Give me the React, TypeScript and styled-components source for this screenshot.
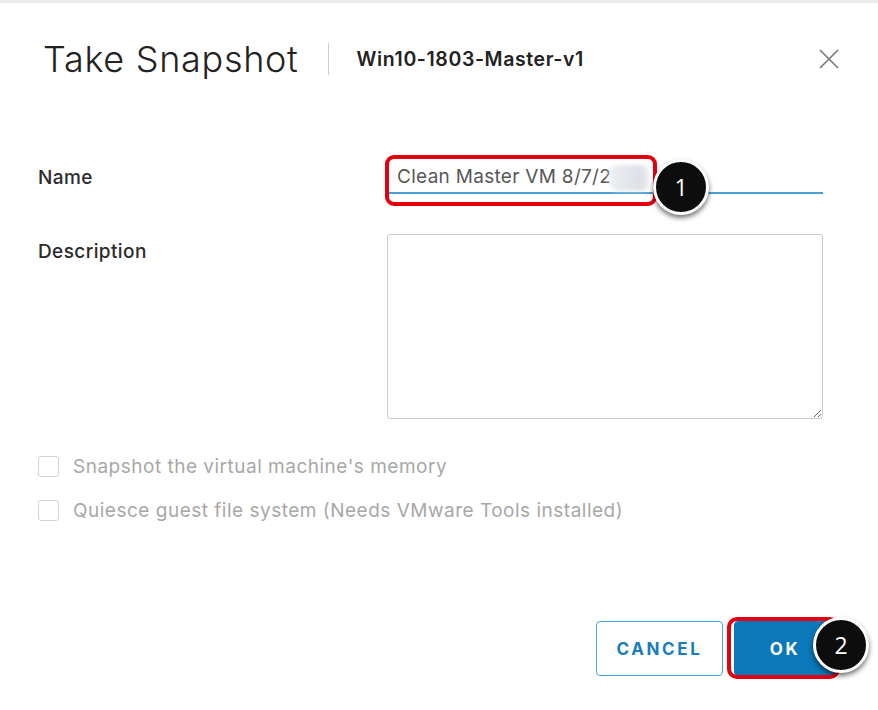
import React from 'react';
import styled, { createGlobalStyle } from 'styled-components';

const GlobalStyle = createGlobalStyle`
  html, body {
    margin: 0;
    padding: 0;
    background: #fff;
  }

  body {
    font-family: Inter, "Open Sans", "Liberation Sans", sans-serif;
    color: #333;
  }
`;

const Dialog = styled.div`
  position: relative;
  width: 878px;
  height: 710px;
  box-sizing: border-box;
  border-top: 3px solid #ebebeb;
  overflow: hidden;
  background: #fff;
`;

const Header = styled.header`
  display: flex;
  align-items: center;
  height: 112px;
  padding: 0 37px 0 43px;
`;

const Title = styled.h1`
  margin: 0;
  font-size: 36px;
  font-weight: 300;
  color: #222;
  letter-spacing: 0.7px;
`;

const Divider = styled.span`
  width: 1px;
  height: 32px;
  margin: 0 28px 0 29px;
  background: #cfcfcf;
`;

const Subtitle = styled.h2`
  margin: 0;
  font-size: 19.5px;
  font-weight: 600;
  color: #222;
  letter-spacing: 0.6px;
  flex: 1;
`;

const CloseButton = styled.button`
  display: flex;
  align-items: center;
  justify-content: center;
  width: 24px;
  height: 24px;
  padding: 0;
  border: 0;
  background: none;
  cursor: pointer;
`;

const Form = styled.form`
  display: grid;
  grid-template-columns: 349px 436px;
  row-gap: 40px;
  margin-top: 45px;
  padding-left: 38px;
`;

const Label = styled.label<{ $top?: boolean }>`
  display: flex;
  align-items: ${(p) => (p.$top ? 'flex-start' : 'center')};
  padding-top: ${(p) => (p.$top ? '6px' : '0')};
  font-size: 19px;
  font-weight: 500;
  letter-spacing: 0.4px;
  color: #2b2b2b;
`;

const Field = styled.div`
  position: relative;
`;

const TextInput = styled.input`
  display: block;
  width: 100%;
  height: 34px;
  box-sizing: border-box;
  padding: 0 10px;
  border: 0;
  border-bottom: 2px solid #4a9fd9;
  outline: none;
  font-family: inherit;
  font-size: 19px;
  letter-spacing: 0.3px;
  color: #575757;
  background: transparent;
`;

const TextArea = styled.textarea`
  display: block;
  width: 100%;
  height: 185px;
  box-sizing: border-box;
  border: 1px solid #cdcdcd;
  border-radius: 3px;
  resize: vertical;
  outline: none;
  font-family: inherit;
  font-size: 17px;
`;

const Redacted = styled.span`
  position: absolute;
  left: 222px;
  top: 5px;
  width: 40px;
  height: 26px;
  border-radius: 8px;
  background: linear-gradient(90deg, rgba(232, 234, 238, 0.7), #e4e7eb 40%, #dde1e6 80%, rgba(228, 231, 235, 0.7));
  filter: blur(2px);
`;

const Highlight = styled.span<{ $inset: string; $width?: string; $radius: number }>`
  position: absolute;
  inset: ${(p) => p.$inset};
  ${(p) => (p.$width ? `width: ${p.$width};` : '')}
  border: 4px solid #e3000f;
  border-radius: ${(p) => p.$radius}px;
  pointer-events: none;
`;

const Badge = styled.span<{ $left: number; $top: number }>`
  position: absolute;
  left: ${(p) => p.$left}px;
  top: ${(p) => p.$top}px;
  width: 50px;
  height: 50px;
  display: flex;
  align-items: center;
  justify-content: center;
  border: 3px solid #fff;
  border-radius: 50%;
  background: #0d0d0d;
  box-shadow: 0 3px 5px rgba(0, 0, 0, 0.55);
  color: #fff;
  font-family: "Open Sans", "Liberation Sans", sans-serif;
  font-size: 23px;
  font-weight: 400;
  z-index: 2;
`;

const Options = styled.div`
  display: flex;
  flex-direction: column;
  margin-top: 25px;
  padding-left: 38px;
`;

const Option = styled.label`
  display: flex;
  align-items: center;
  height: 44px;
  gap: 14px;
  font-size: 19px;
  letter-spacing: 0.5px;
  color: #a8a8a8;
`;

const Box = styled.span`
  width: 19px;
  height: 19px;
  border: 1px solid #d2d2d2;
  border-radius: 3px;
  background: #fff;
`;

const Footer = styled.footer`
  display: flex;
  justify-content: flex-end;
  gap: 11px;
  margin-top: 89px;
  padding-right: 42px;
`;

const ButtonWrap = styled.div`
  position: relative;
`;

const Button = styled.button<{ $primary?: boolean }>`
  height: 55px;
  width: ${(p) => (p.$primary ? '102px' : '127px')};
  box-sizing: border-box;
  border: 1px solid ${(p) => (p.$primary ? '#0079b8' : '#49a8dc')};
  border-radius: 4px;
  background: ${(p) => (p.$primary ? '#0a78b9' : '#fff')};
  color: ${(p) => (p.$primary ? '#fff' : '#1a7dbd')};
  font-family: inherit;
  font-size: 17px;
  font-weight: 700;
  letter-spacing: 2.6px;
  cursor: pointer;
`;

export default function App() {
  return (
    <>
      <GlobalStyle />
      <Dialog>
        <Header>
          <Title>Take Snapshot</Title>
          <Divider />
          <Subtitle>Win10-1803-Master-v1</Subtitle>
          <CloseButton aria-label="Close">
            <svg width="22" height="22" viewBox="0 0 22 22">
              <path d="M2 2 L20 20 M20 2 L2 20" stroke="#7a7a7a" strokeWidth="1.7" fill="none" />
            </svg>
          </CloseButton>
        </Header>

        <Form>
          <Label htmlFor="snap-name">Name</Label>
          <Field>
            <TextInput id="snap-name" defaultValue="Clean Master VM 8/7/2" readOnly />
            <Redacted />
            <Highlight $inset="-5px auto auto -2px" $width="264px" $radius={9} style={{ height: 43 }} />
            <Badge $left={266} $top={-1}>1</Badge>
          </Field>

          <Label $top htmlFor="snap-desc">Description</Label>
          <Field>
            <TextArea id="snap-desc" />
          </Field>
        </Form>

        <Options>
          <Option>
            <Box />
            Snapshot the virtual machine's memory
          </Option>
          <Option>
            <Box />
            Quiesce guest file system (Needs VMware Tools installed)
          </Option>
        </Options>

        <Footer>
          <Button type="button">CANCEL</Button>
          <ButtonWrap>
            <Button type="button" $primary>
              OK
            </Button>
            <Highlight $inset="-4px -4px -3px -7px" $radius={10} />
            <Badge $left={79} $top={-4}>2</Badge>
          </ButtonWrap>
        </Footer>
      </Dialog>
    </>
  );
}
